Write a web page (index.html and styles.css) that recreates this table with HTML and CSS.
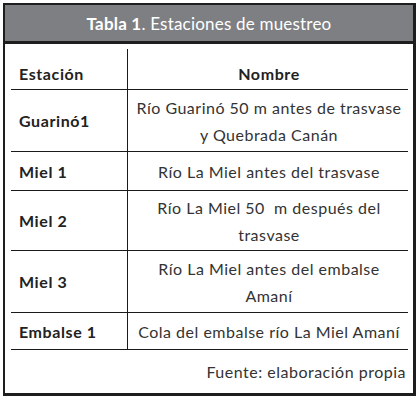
FILE: index.html
```html
<!DOCTYPE html>
<html lang="es">
<head>
<meta charset="utf-8">
<link rel="stylesheet" href="styles.css">
</head>
<body>
<div class="card">
  <div class="title"><b>Tabla 1</b>. Estaciones de muestreo</div>
  <div class="table">
    <div class="c1 head">Estación</div>
    <div class="c2 head">Nombre</div>
    <div class="c1">Guarinó1</div>
    <div class="c2">Río Guarinó 50 m antes de trasvase<br>y Quebrada Canán</div>
    <div class="c1">Miel 1</div>
    <div class="c2">Río La Miel antes del trasvase</div>
    <div class="c1">Miel 2</div>
    <div class="c2">Río La Miel 50&nbsp; m después del<br>trasvase</div>
    <div class="c1">Miel 3</div>
    <div class="c2">Río La Miel antes del embalse<br>Amaní</div>
    <div class="c1">Embalse 1</div>
    <div class="c2">Cola del embalse río La Miel Amaní</div>
  </div>
  <div class="source">Fuente: elaboración propia</div>
</div>
</body>
</html>
```
FILE: styles.css
```css
html, body {
  margin: 0;
  padding: 0;
  background: #ffffff;
}
body {
  font-family: Lato, "Noto Sans", sans-serif;
  font-size: 16px;
  letter-spacing: 0.5px;
  color: #333333;
}
.card {
  margin: 3px;
  width: 413px;
  height: 393px;
  box-sizing: border-box;
  border: 2px solid #1e1e1e;
  border-right-width: 3px;
  border-bottom-width: 3px;
  display: flex;
  flex-direction: column;
}
.title {
  height: 36px;
  background: #7e7f83;
  border-bottom: 3px solid #1e1e1e;
  color: #ffffff;
  font-size: 17px;
  display: flex;
  align-items: center;
  justify-content: center;
  letter-spacing: 0.2px;
}
.title b {
  font-weight: 700;
}
.table {
  margin: 5px 5px 0 6px;
  display: grid;
  grid-template-columns: 117px 1fr;
  grid-template-rows: 41px 62px 39px 60px 62px 37px;
}
.c1, .c2 {
  box-sizing: border-box;
  border-bottom: 1px solid #1a1a1a;
  display: flex;
  align-items: center;
  line-height: 27px;
}
.c1 {
  border-right: 1px solid #1a1a1a;
  padding-left: 8px;
  font-weight: 700;
  color: #222222;
  letter-spacing: 0.6px;
}
.c2 {
  justify-content: center;
  text-align: center;
  padding-left: 2px;
}
.head {
  padding-top: 8px;
  font-weight: 700;
  color: #222222;
  letter-spacing: 0.6px;
}
.source {
  text-align: right;
  padding: 12px 7px 0 0;
  line-height: 20px;
}
```
